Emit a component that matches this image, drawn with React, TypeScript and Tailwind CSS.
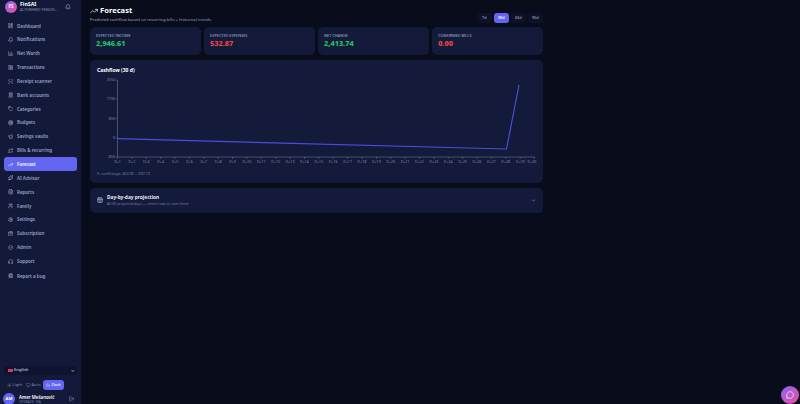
import {
  LayoutDashboard, Bell, BarChart3, Receipt, ScanLine, Landmark, Tag, Target, PiggyBank, Repeat, TrendingUp,
  Sparkles, FileText, Users, Settings, ShoppingBag, ShieldCheck, Headphones, Bug, Sun, Monitor, Moon, LogOut,
  ChevronDown, CalendarDays, MessageCircle,
} from 'lucide-react'

const navItems = [
  { label: 'Dashboard', icon: LayoutDashboard },
  { label: 'Notifications', icon: Bell },
  { label: 'Net Worth', icon: BarChart3 },
  { label: 'Transactions', icon: Receipt },
  { label: 'Receipt scanner', icon: ScanLine },
  { label: 'Bank accounts', icon: Landmark },
  { label: 'Categories', icon: Tag },
  { label: 'Budgets', icon: Target },
  { label: 'Savings vaults', icon: PiggyBank },
  { label: 'Bills & recurring', icon: Repeat },
  { label: 'Forecast', icon: TrendingUp, active: true },
  { label: 'AI Advisor', icon: Sparkles },
  { label: 'Reports', icon: FileText },
  { label: 'Family', icon: Users },
  { label: 'Settings', icon: Settings },
  { label: 'Subscription', icon: ShoppingBag },
  { label: 'Admin', icon: ShieldCheck },
  { label: 'Support', icon: Headphones },
]

const stats = [
  { label: 'EXPECTED INCOME', value: '2,946.61', color: 'text-[#22c55e]' },
  { label: 'EXPECTED EXPENSES', value: '532.87', color: 'text-[#ef4444]' },
  { label: 'NET CHANGE', value: '2,413.74', color: 'text-[#22c55e]' },
  { label: 'CONFIRMED BILLS', value: '0.00', color: 'text-[#ef4444]' },
]

const yTicks = [
  { label: '2550', y: 80 },
  { label: '1700', y: 99 },
  { label: '850', y: 118.5 },
  { label: '0', y: 138 },
  { label: '-850', y: 157 },
]

const days = Array.from({ length: 30 }, (_, i) => i + 1)

function dayX(day: number) {
  return 117.5 + (day - 1) * 14.38
}

function CashflowChart() {
  return (
    <svg viewBox="90 74 453 97" className="h-[97px] w-[453px]">
      <path d="M117.5 80V157H535" fill="none" stroke="#6a7699" strokeWidth="0.6" />
      {yTicks.map((t) => (
        <g key={t.label}>
          <path d={`M115.5 ${t.y}H117.5`} stroke="#6a7699" strokeWidth="0.5" />
          <text x="115" y={t.y + 1.3} textAnchor="end" fontSize="3.6" fill="#7f89ad">{t.label}</text>
        </g>
      ))}
      {days.map((d) => (
        <g key={d}>
          <path d={`M${dayX(d)} 157V159`} stroke="#6a7699" strokeWidth="0.5" />
          <text x={d === 30 ? 532 : dayX(d)} y="162.5" textAnchor="middle" fontSize="3.6" fill="#7f89ad">{`D+${d}`}</text>
        </g>
      ))}
      <path
        d="M117.5 138.7L506.5 149L519 85"
        fill="none"
        stroke="#4a4ddc"
        strokeWidth="1.2"
      />
    </svg>
  )
}

export default function App() {
  return (
    <div className="flex h-[404px] w-[800px] overflow-hidden bg-[#090c1b] font-['Noto_Sans',sans-serif]">
      <aside className="flex h-full w-[81px] shrink-0 flex-col bg-[#131938]">
        <div className="flex h-[13px] shrink-0 items-center pl-[5px] pr-[10px]">
          <div className="flex h-[12px] w-[12px] shrink-0 items-center justify-center rounded-full bg-gradient-to-br from-[#8b5cf6] to-[#ec4899] text-[4.5px] font-bold text-white">FS</div>
          <div className="ml-[3px] min-w-0 flex-1">
            <div className="text-[5.2px] font-bold leading-[6px] text-white">FinSAI</div>
            <div className="truncate text-[3.4px] leading-[5px] text-[#8791b5]">AI-POWERED PERSON...</div>
          </div>
          <Bell className="h-[6px] w-[6px] text-[#a9b3d4]" />
        </div>
        <nav className="mt-[6px] flex flex-col px-[4px]">
          {navItems.map((item) => (
            <div
              key={item.label}
              className={`flex h-[13.85px] items-center gap-[4px] rounded-[3px] pl-[3.5px] text-[4.5px] font-semibold ${item.active ? 'bg-[#6366f1] text-white' : 'text-[#98a2c8]'}`}
            >
              <item.icon className="h-[5.5px] w-[5.5px] shrink-0" strokeWidth={2.5} />
              <span>{item.label}</span>
            </div>
          ))}
          <div className="mt-[1px] flex h-[13.85px] items-center gap-[4px] pl-[3.5px] text-[4.5px] font-semibold text-[#98a2c8]">
            <Bug className="h-[5.5px] w-[5.5px] shrink-0" strokeWidth={2.5} />
            <span>Report a bug</span>
          </div>
        </nav>
        <div className="mt-auto -mb-[1px] px-[4px]">
          <div className="flex h-[9px] items-center justify-between rounded-[2px] bg-[#0e1330] pl-[4px] pr-[2px] text-[4.2px] font-medium text-[#c5cce4]">
            <span className="flex items-center gap-[1px]"><span className="h-[3px] w-[5px] bg-[#d8394f]" />English</span>
            <ChevronDown className="h-[4px] w-[4px] text-white" strokeWidth={4} />
          </div>
          <div className="mt-[5px] flex h-[10px] items-center text-[4px] font-medium text-[#7280a8]">
            <span className="flex w-[21px] items-center gap-[1px] pl-[3px]"><Sun className="h-[4.5px] w-[4.5px]" />Light</span>
            <span className="flex w-[18px] items-center gap-[1px] pl-[1px]"><Monitor className="h-[4.5px] w-[4.5px]" />Auto</span>
            <span className="flex h-[10px] w-[21px] items-center justify-center gap-[1px] rounded-[3px] bg-[#6366f1] text-white"><Moon className="h-[4.5px] w-[4.5px]" />Dark</span>
          </div>
          <div className="mt-[3px] flex h-[12px] items-center">
            <div className="-ml-[1px] flex h-[12px] w-[12px] shrink-0 items-center justify-center rounded-full bg-[#6366f1] text-[4.2px] font-bold text-white">AM</div>
            <div className="ml-[4px] min-w-0 flex-1">
              <div className="truncate text-[4.4px] font-semibold leading-[6px] text-white">Amer Mešanović</div>
              <div className="text-[3.2px] leading-[4px] text-[#7280a8]">UPGRADE: 2FA</div>
            </div>
            <LogOut className="mr-[3px] h-[5.5px] w-[5.5px] text-[#a9b3d4]" />
          </div>
        </div>
      </aside>

      <main className="relative flex-1 pl-[9px] pr-[257px] pt-[4px]">
        <div className="flex h-[23px] items-start justify-between">
          <div>
            <h1 className="flex items-center gap-[2px] text-[7.6px] font-bold leading-[13px] text-white">
              <TrendingUp className="h-[8px] w-[8px]" />
              Forecast
            </h1>
            <p className="text-[4.2px] leading-[6px] text-[#98a2c4]">Predicted cashflow based on recurring bills + historical trends.</p>
          </div>
          <div className="mt-[9px] flex gap-[1.5px] text-[3.8px] font-semibold text-[#8791b5]">
            <span className="flex h-[10px] w-[15.5px] items-center justify-center rounded-[3px] bg-[#0e1128]">7d</span>
            <span className="flex h-[10px] w-[15.5px] items-center justify-center rounded-[3px] bg-[#6366f1] text-white">30d</span>
            <span className="flex h-[10px] w-[15.5px] items-center justify-center rounded-[3px] bg-[#0e1128]">60d</span>
            <span className="flex h-[10px] w-[15.5px] items-center justify-center rounded-[3px] bg-[#0e1128]">90d</span>
          </div>
        </div>
        <div className="grid grid-cols-4 gap-[3.2px]">
          {stats.map((s) => (
            <div key={s.label} className="h-[28px] rounded-[5px] bg-[#141a3a] pl-[6px] pt-[6px]">
              <div className="text-[3.8px] font-medium leading-[5px] text-[#98a2c4]">{s.label}</div>
              <div className={`text-[7.3px] font-extrabold leading-[11px] ${s.color}`}>{s.value}</div>
            </div>
          ))}
        </div>
        <section className="mt-[5px] h-[123px] rounded-[5px] bg-[#141a3a]">
          <h2 className="pl-[7px] pt-[6px] text-[5px] font-bold leading-[8px] text-white">Cashflow (30 d)</h2>
          <CashflowChart />
          <p className="pl-[7px] text-[3.7px] leading-[5px] text-[#7280a8]">fL conf/range: 453.99 … 697.73</p>
        </section>
        <section className="mt-[4.5px] flex h-[25.5px] items-center rounded-[5px] bg-[#141a3a] pl-[7px] pr-[7px]">
          <CalendarDays className="h-[6px] w-[6px] shrink-0 text-[#a9b3d4]" strokeWidth={2.5} />
          <div className="ml-[4px] flex-1">
            <div className="text-[4.8px] font-bold leading-[8px] text-[#e5e8f5]">Day-by-day projection</div>
            <div className="text-[3.6px] leading-[6px] text-[#7280a8]">All 30 projected days — select rows to sum them</div>
          </div>
          <ChevronDown className="h-[5px] w-[5px] text-[#a9b3d4]" strokeWidth={2.5} />
        </section>
        <div className="absolute bottom-0 right-[1px] flex h-[18px] w-[18px] items-center justify-center rounded-full bg-gradient-to-br from-[#8b5cf6] to-[#ec4899]">
          <MessageCircle className="h-[8px] w-[8px] text-white" />
        </div>
      </main>
    </div>
  )
}
